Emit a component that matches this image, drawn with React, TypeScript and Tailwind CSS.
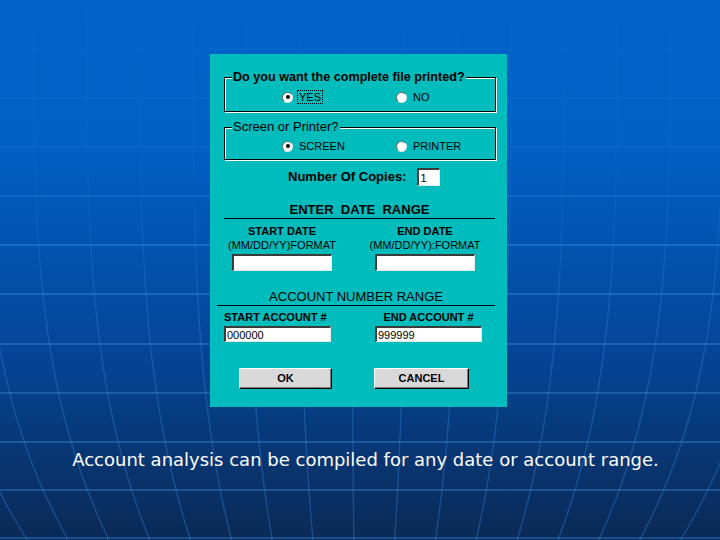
import React from "react";

const hLines = [49, 98, 147, 196, 245, 294, 344, 393, 442, 490, 538];

function longitude(x0: number): string {
  const pts: string[] = [];
  for (let y = -10; y <= 550; y += 10) {
    const t = Math.max(0, y) / 540;
    const f = 1 - 0.23 * Math.pow(t, 3.5);
    const x = 360 + (x0 - 360) * f;
    pts.push(`${x.toFixed(1)},${y}`);
  }
  return "M" + pts.join(" L");
}

const longs: number[] = [];
for (let i = -5; i <= 18; i++) longs.push(34 + 53 * i);

function Background() {
  return (
    <svg className="absolute inset-0" width="720" height="540" viewBox="0 0 720 540">
      <defs>
        <linearGradient id="lgh" x1="0" y1="0" x2="0" y2="540" gradientUnits="userSpaceOnUse">
          <stop offset="0" stopColor="#3d8fe6" stopOpacity="0.04" />
          <stop offset="0.3" stopColor="#3d8fe6" stopOpacity="0.12" />
          <stop offset="0.45" stopColor="#3d8fe6" stopOpacity="0.4" />
          <stop offset="1" stopColor="#3d8fe6" stopOpacity="0.35" />
        </linearGradient>
        <linearGradient id="lgv" x1="0" y1="0" x2="0" y2="540" gradientUnits="userSpaceOnUse">
          <stop offset="0" stopColor="#3d8fe6" stopOpacity="0.03" />
          <stop offset="0.35" stopColor="#3d8fe6" stopOpacity="0.12" />
          <stop offset="0.6" stopColor="#3d8fe6" stopOpacity="0.3" />
          <stop offset="1" stopColor="#3d8fe6" stopOpacity="0.35" />
        </linearGradient>
      </defs>
      {hLines.map((y) => (
        <line key={y} x1="0" x2="720" y1={y} y2={y} stroke="url(#lgh)" strokeWidth="2" />
      ))}
      {longs.map((x) => (
        <path key={x} d={longitude(x)} fill="none" stroke="url(#lgv)" strokeWidth="1.3" />
      ))}
    </svg>
  );
}

function Radio({ checked }: { checked?: boolean }) {
  return (
    <span className="w-[11px] h-[11px] rounded-full bg-white border border-t-[#6b6b6b] border-l-[#6b6b6b] border-r-[#e6e6e6] border-b-[#e6e6e6] flex items-center justify-center shrink-0">
      {checked ? <span className="w-[4px] h-[4px] rounded-full bg-black" /> : null}
    </span>
  );
}

function RadioItem({ label, checked, focus, width }: { label: string; checked?: boolean; focus?: boolean; width?: string }) {
  return (
    <div className={`flex items-center gap-[4px] ${width ?? ""}`}>
      <Radio checked={checked} />
      <span
        className={`text-[11px] leading-[12px] text-black ${focus ? "border border-dotted border-black px-[1px]" : "border border-transparent px-[1px]"}`}
      >
        {label}
      </span>
    </div>
  );
}

function Input({ value, className }: { value?: string; className: string }) {
  return (
    <div
      className={`bg-white border-t-[2px] border-l-[2px] border-t-[#3a3a3a] border-l-[#3a3a3a] border-b border-r border-b-[#e8e8e8] border-r-[#e8e8e8] text-[11px] leading-[12px] text-black pl-[1px] flex items-center ${className}`}
    >
      {value}
    </div>
  );
}

function Button({ label, className }: { label: string; className: string }) {
  return (
    <div
      className={`bg-[#d9d9d9] border border-t-white border-l-white border-b-black border-r-black shadow-[inset_-1px_-1px_0_#7a7a7a] flex items-center justify-center text-[11px] font-bold text-black ${className}`}
    >
      {label}
    </div>
  );
}

export default function App() {
  return (
    <div
      className="relative w-[720px] h-[540px] overflow-hidden bg-[linear-gradient(180deg,#0063c9_0%,#0061c5_25%,#0449a0_60%,#0a2a56_100%)]"
      style={{ fontFamily: '"Liberation Sans", Arial, sans-serif' }}
    >
      <Background />
      <div className="relative flex flex-col pt-[54px]">
        <div className="ml-[210px] w-[297px] h-[353px] bg-[#00bcbc] flex flex-col">
          {/* Group 1 */}
          <div className="relative mt-[23px] ml-[14px] mr-[11px] h-[35px] border border-black shadow-[inset_1px_1px_0_#ffffff,1px_1px_0_#ffffff]">
            <span className="absolute -top-[9px] left-[7px] px-[1px] bg-[#00bcbc] text-[12.6px] leading-[16px] font-bold text-black">
              Do you want the complete file printed?
            </span>
            <div className="flex pt-[12px] pl-[57px]">
              <RadioItem label="YES" checked focus width="w-[114px]" />
              <RadioItem label="NO" />
            </div>
          </div>
          {/* Group 2 */}
          <div className="relative mt-[15px] ml-[14px] mr-[11px] h-[33px] border border-black shadow-[inset_1px_1px_0_#ffffff,1px_1px_0_#ffffff]">
            <span className="absolute -top-[9px] left-[7px] px-[1px] bg-[#00bcbc] text-[13px] leading-[16px] text-black">
              Screen or Printer?
            </span>
            <div className="flex pt-[11px] pl-[57px]">
              <RadioItem label="SCREEN" checked width="w-[114px]" />
              <RadioItem label="PRINTER" />
            </div>
          </div>
          {/* Copies */}
          <div className="mt-[8px] pl-[78px] flex items-center gap-[11px] h-[18px]">
            <span className="text-[13px] font-bold text-black leading-[16px]">Number Of Copies:</span>
            <Input value="1" className="w-[23px] h-[18px]" />
          </div>
          {/* Date range */}
          <div className="mt-[16px] ml-[14px] mr-[12px] border-b border-black text-center text-[13px] leading-[16px] text-black font-semibold">
            ENTER&nbsp; DATE&nbsp; RANGE
          </div>
          <div className="flex mt-[6px]">
            <div className="ml-[22px] w-[100px] flex flex-col items-center">
              <span className="text-[11px] font-bold leading-[13px] text-black">START DATE</span>
              <span className="mt-[1px] text-[11px] leading-[13px] text-black whitespace-nowrap">(MM/DD/YY)FORMAT</span>
              <Input className="mt-[2px] w-[100px] h-[17px]" />
            </div>
            <div className="ml-[43px] w-[100px] flex flex-col items-center">
              <span className="text-[11px] font-bold leading-[13px] text-black">END DATE</span>
              <span className="mt-[1px] text-[11px] leading-[13px] text-black whitespace-nowrap">(MM/DD/YY):FORMAT</span>
              <Input className="mt-[2px] w-[100px] h-[17px]" />
            </div>
          </div>
          {/* Account range */}
          <div className="mt-[18px] ml-[7px] mr-[12px] border-b border-black text-center text-[13px] leading-[16px] text-black">
            ACCOUNT NUMBER RANGE
          </div>
          <div className="flex mt-[5px]">
            <div className="ml-[14px] w-[107px] flex flex-col">
              <span className="text-[11px] font-bold leading-[13px] text-black whitespace-nowrap">START ACCOUNT #</span>
              <Input value="000000" className="mt-[2px] w-[107px] h-[16px]" />
            </div>
            <div className="ml-[44px] w-[107px] flex flex-col items-center">
              <span className="text-[11px] font-bold leading-[13px] text-black whitespace-nowrap">END ACCOUNT #</span>
              <Input value="999999" className="mt-[2px] w-[107px] h-[16px]" />
            </div>
          </div>
          {/* Buttons */}
          <div className="flex mt-[26px]">
            <Button label="OK" className="ml-[29px] w-[93px] h-[21px]" />
            <Button label="CANCEL" className="ml-[42px] w-[95px] h-[21px]" />
          </div>
        </div>
        <div
          className="mt-[41px] pl-[11px] text-center text-white text-[18px] leading-[24px]"
          style={{ fontFamily: '"DejaVu Sans", Verdana, sans-serif' }}
        >
          Account analysis can be compiled for any date or account range.
        </div>
      </div>
    </div>
  );
}
